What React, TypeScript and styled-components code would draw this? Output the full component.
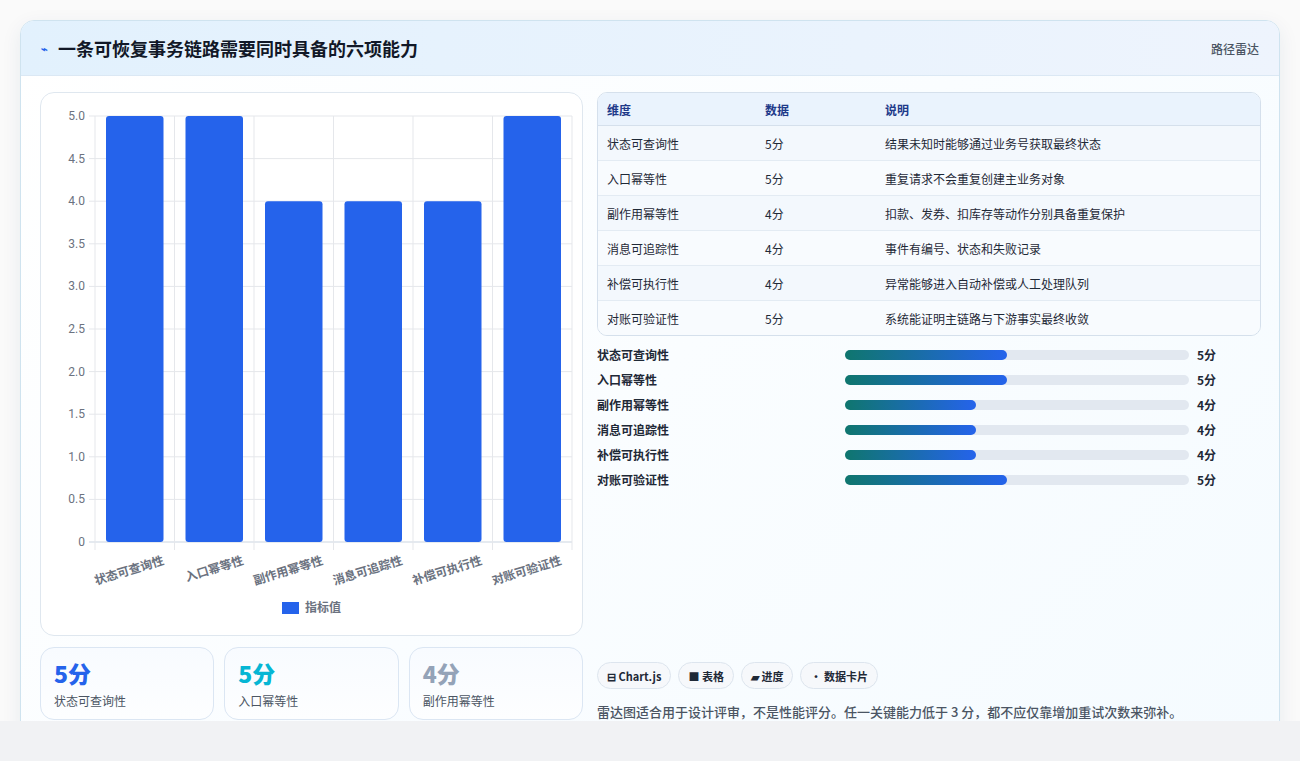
import React from 'react'
import styled, { createGlobalStyle } from 'styled-components'

const Global = createGlobalStyle`
  body { margin: 0; background: #f1f2f4; font-family: "Noto Sans CJK SC", "Noto Sans", sans-serif; }
`

const rows = [
  { name: '状态可查询性', v: 5, desc: '结果未知时能够通过业务号获取最终状态' },
  { name: '入口幂等性', v: 5, desc: '重复请求不会重复创建主业务对象' },
  { name: '副作用幂等性', v: 4, desc: '扣款、发券、扣库存等动作分别具备重复保护' },
  { name: '消息可追踪性', v: 4, desc: '事件有编号、状态和失败记录' },
  { name: '补偿可执行性', v: 4, desc: '异常能够进入自动补偿或人工处理队列' },
  { name: '对账可验证性', v: 5, desc: '系统能证明主链路与下游事实最终收敛' },
]

const Page = styled.div`
  padding: 20px 20px 20px 20px;
  height: 721px;
  box-sizing: border-box;
  background: linear-gradient(#fafafa 0, #fafafa 740px, #eeeeee 740px);
`
const Card = styled.div`
  height: 720px;
  box-sizing: border-box;
  border: 1px solid #cfe3ef;
  border-radius: 14px;
  background: linear-gradient(135deg, #ffffff, #f5fbff);
  box-shadow: 0 6px 20px rgba(30, 60, 100, 0.08);
  overflow: hidden;
  display: flex;
  flex-direction: column;
`
const Header = styled.div`
  height: 55px;
  flex: none;
  box-sizing: border-box;
  display: flex;
  align-items: center;
  justify-content: space-between;
  padding: 0 20px;
  background: linear-gradient(90deg, #e2f1fd, #eef4fd);
  border-bottom: 1px solid #dbe8f4;
`
const Title = styled.h1`
  margin: 0;
  font-size: 18px;
  font-weight: 700;
  color: #111827;
  display: flex;
  align-items: center;
  gap: 10px;
`
const Bolt = styled.span`
  color: #2563eb;
  font-size: 11px;
`
const Tag = styled.span`
  font-size: 12px;
  color: #4b5563;
  font-weight: 500;
`
const Body = styled.div`
  flex: 1;
  display: grid;
  grid-template-columns: 543px 664px;
  gap: 14px;
  padding: 16px 19px 18px 19px;
`
const Left = styled.div`
  display: flex;
  flex-direction: column;
  gap: 11px;
`
const ChartBox = styled.div`
  height: 544px;
  box-sizing: border-box;
  border: 1px solid #dfe7ef;
  border-radius: 14px;
  background: #fff;
`
const Stats = styled.div`
  display: grid;
  grid-template-columns: repeat(3, 1fr);
  gap: 10px;
`
const Stat = styled.div`
  height: 73px;
  box-sizing: border-box;
  border: 1px solid #dbe6f3;
  border-radius: 14px;
  background: linear-gradient(180deg, #f8fbff, #fdfeff);
  padding: 10px 13px;
`
const StatValue = styled.div<{ c: string }>`
  font-size: 23px;
  font-weight: 800;
  color: ${({ c }) => c};
  line-height: 30px;
`
const StatLabel = styled.div`
  font-size: 12px;
  color: #4b5563;
  margin-top: 4px;
`
const Right = styled.div`
  display: flex;
  flex-direction: column;
`
const Table = styled.table`
  width: 100%;
  border-collapse: separate;
  border-spacing: 0;
  border: 1px solid #d5e0ec;
  border-radius: 10px;
  overflow: hidden;
  font-size: 12px;
  color: #1f2937;
`
const Th = styled.th<{ w?: string }>`
  text-align: left;
  font-weight: 600;
  color: #1e3a8a;
  background: #eaf3fd;
  height: 32px;
  padding: 0 9px;
  width: ${({ w }) => w || 'auto'};
  border-bottom: 1px solid #d5e0ec;
`
const Td = styled.td<{ odd: boolean }>`
  height: 34px;
  padding: 0 9px;
  background: ${({ odd }) => (odd ? '#f3f8fd' : '#f8fbfe')};
  border-bottom: 1px solid #e3ebf3;
  tr:last-child & { border-bottom: none; }
`
const Bars = styled.div`
  margin-top: 10px;
  display: flex;
  flex-direction: column;
  gap: 9px;
`
const BarRow = styled.div`
  display: grid;
  grid-template-columns: 248px 344px auto;
  align-items: center;
  font-size: 12px;
  color: #1f2937;
  font-weight: 600;
  height: 16px;
`
const Track = styled.div`
  height: 10px;
  border-radius: 5px;
  background: #e2e8f0;
`
const Fill = styled.div`
  height: 100%;
  border-radius: 5px;
  background: linear-gradient(90deg, #0f766e, #2563eb);
`
const BarValue = styled.span`
  margin-left: 8px;
`
const Chips = styled.div`
  margin-top: auto;
  display: flex;
  gap: 7px;
`
const Chip = styled.span`
  height: 27px;
  box-sizing: border-box;
  display: inline-flex;
  align-items: center;
  padding: 0 9px;
  border: 1px solid #dde5ee;
  border-radius: 14px;
  background: #f6f8fb;
  font-size: 11px;
  font-weight: 600;
  color: #1f2937;
`
const Note = styled.p`
  margin: 13px 0 0;
  font-size: 13px;
  color: #4b5563;
  font-weight: 500;
`

const Chart = () => {
  const x0 = 54, x1 = 531, yTop = 23, yBot = 449
  const cw = (x1 - x0) / 6
  const y = (v: number) => yBot - (v / 5) * (yBot - yTop)
  const ticks = [0, 0.5, 1, 1.5, 2, 2.5, 3, 3.5, 4, 4.5, 5]
  return (
    <svg width="541" height="542" style={{ display: 'block' }}>
      {ticks.map(t => (
        <g key={t}>
          <line x1={x0 - 6} x2={x1} y1={y(t)} y2={y(t)} stroke={t === 0 ? '#cbd5e1' : '#e5e7eb'} />
          <text x={x0 - 10} y={y(t) + 4} textAnchor="end" fontSize="12" fill="#6b7280" fontFamily="Roboto, sans-serif">
            {t === 0 ? '0' : t.toFixed(1)}
          </text>
        </g>
      ))}
      {Array.from({ length: 7 }).map((_, i) => (
        <line key={i} x1={x0 + i * cw} x2={x0 + i * cw} y1={yTop} y2={yBot + 8} stroke="#e5e7eb" />
      ))}
      {rows.map((r, i) => (
        <rect key={r.name} x={x0 + i * cw + 11} y={y(r.v)} width={cw - 22} height={yBot - y(r.v)} rx="3" fill="#2563eb" />
      ))}
      {rows.map((r, i) => {
        const cx = x0 + i * cw + cw / 2
        return (
          <text key={r.name} x={cx + 30} y={yBot + 22} textAnchor="end" fontSize="12" fontWeight="600" fill="#6b7280"
            transform={`rotate(-17 ${cx + 30} ${yBot + 22})`}>
            {r.name}
          </text>
        )
      })}
      <rect x="241" y="509" width="17" height="12" fill="#2563eb" />
      <text x="264" y="519" fontSize="12" fontWeight="600" fill="#6b7280">指标值</text>
    </svg>
  )
}

const App = () => (
  <Page>
    <Global />
    <Card>
      <Header>
        <Title><Bolt>⌁</Bolt>一条可恢复事务链路需要同时具备的六项能力</Title>
        <Tag>路径雷达</Tag>
      </Header>
      <Body>
        <Left>
          <ChartBox><Chart /></ChartBox>
          <Stats>
            <Stat><StatValue c="#2563eb">5分</StatValue><StatLabel>状态可查询性</StatLabel></Stat>
            <Stat><StatValue c="#06b6d4">5分</StatValue><StatLabel>入口幂等性</StatLabel></Stat>
            <Stat><StatValue c="#94a3b8">4分</StatValue><StatLabel>副作用幂等性</StatLabel></Stat>
          </Stats>
        </Left>
        <Right>
          <Table>
            <thead>
              <tr><Th w="140px">维度</Th><Th w="102px">数据</Th><Th>说明</Th></tr>
            </thead>
            <tbody>
              {rows.map((r, i) => (
                <tr key={r.name}>
                  <Td odd={i % 2 === 0}>{r.name}</Td>
                  <Td odd={i % 2 === 0}>{r.v}分</Td>
                  <Td odd={i % 2 === 0}>{r.desc}</Td>
                </tr>
              ))}
            </tbody>
          </Table>
          <Bars>
            {rows.map(r => (
              <BarRow key={r.name}>
                <span>{r.name}</span>
                <Track><Fill style={{ width: `${r.v === 5 ? 47 : 38}%` }} /></Track>
                <BarValue>{r.v}分</BarValue>
              </BarRow>
            ))}
          </Bars>
          <Chips>
            <Chip>⊟ Chart.js</Chip>
            <Chip>■ 表格</Chip>
            <Chip>▰ 进度</Chip>
            <Chip>• 数据卡片</Chip>
          </Chips>
          <Note>雷达图适合用于设计评审，不是性能评分。任一关键能力低于 3 分，都不应仅靠增加重试次数来弥补。</Note>
        </Right>
      </Body>
    </Card>
  </Page>
)

export default App
